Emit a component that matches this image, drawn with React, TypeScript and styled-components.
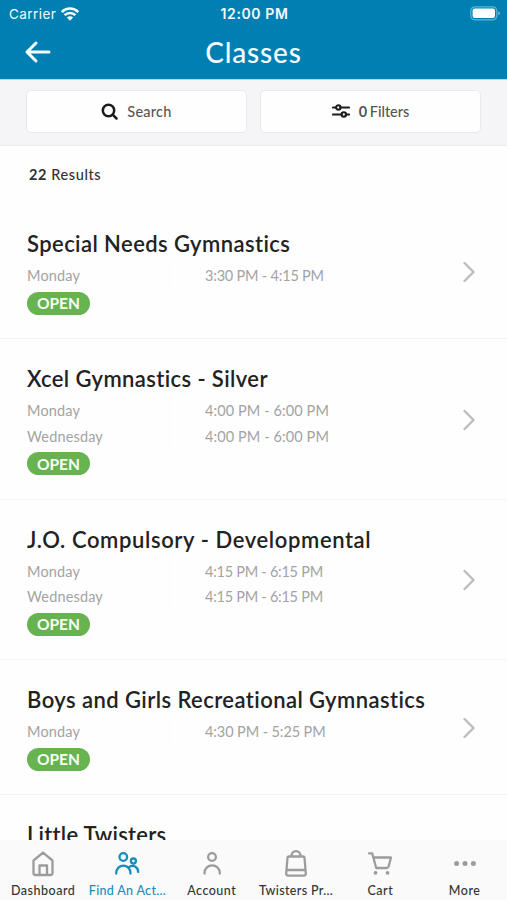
import React from "react";
import styled, { createGlobalStyle } from "styled-components";

const GlobalStyle = createGlobalStyle`
  *, *::before, *::after { box-sizing: border-box; }
  html, body { margin: 0; background: #fefefe; }
  svg { display: block; flex: none; }
`;

const Screen = styled.div`
  width: 507px;
  height: 900px;
  overflow: hidden;
  display: flex;
  flex-direction: column;
  background: #fefefe;
  color: #222;
  font-family: Lato, "Open Sans", sans-serif;
  white-space: nowrap;
`;

const Header = styled.header`
  flex: none;
  height: 80px;
  background: #0080b2;
  border-bottom: 1px solid #a9dbee;
  color: #f4fcff;
`;

const StatusBar = styled.div`
  display: grid;
  grid-template-columns: 1fr auto 1fr;
  align-items: center;
  height: 27px;
  padding: 0 7px 0 9px;
  font-family: Inter, sans-serif;
  font-size: 13.5px;
`;

const Carrier = styled.div`
  display: flex;
  align-items: center;
  gap: 5px;
  letter-spacing: 0.45px;
`;

const Clock = styled.div`
  font-weight: 600;
  font-size: 14px;
  letter-spacing: 0.6px;
`;

const BatterySlot = styled.div`
  justify-self: end;
`;

const NavBar = styled.div`
  display: grid;
  grid-template-columns: 50px 1fr 50px;
  align-items: center;
  height: 50px;
`;

const BackButton = styled.button`
  padding: 0 0 0 24px;
  border: 0;
  background: none;
  color: inherit;
`;

const Heading = styled.h1`
  margin: 0;
  text-align: center;
  font-size: 28px;
  font-weight: 500;
  line-height: 50px;
  letter-spacing: 0.8px;
`;

const Tools = styled.div`
  flex: none;
  display: grid;
  grid-template-columns: 1fr 1fr;
  gap: 13px;
  height: 66px;
  padding: 10px 26px 12px;
  background: #f5f5f7;
  border-bottom: 1px solid #ececee;
`;

const ToolButton = styled.button`
  display: flex;
  align-items: center;
  justify-content: center;
  gap: 9px;
  padding: 0 0 1px;
  border: 1px solid #e9e9ec;
  border-radius: 5px;
  background: #fefefe;
  color: #1c1c1c;
  font-family: inherit;
  font-size: 14.5px;
  font-weight: 500;
`;

const ToolLabel = styled.span<{ $spacing?: number }>`
  color: #555;
  letter-spacing: ${(p) => p.$spacing ?? 0}px;
  word-spacing: -1px;
`;

const Results = styled.div`
  flex: none;
  height: 58px;
  padding-left: 29px;
  line-height: 57px;
  font-size: 14.5px;
  font-weight: 500;
  color: #333;
  letter-spacing: 0.6px;
`;

const List = styled.ul`
  flex: 1;
  min-height: 0;
  margin: 0;
  padding: 0;
  overflow: hidden;
  list-style: none;
`;

const Item = styled.li`
  display: flex;
  align-items: center;
  justify-content: space-between;
  padding: 25px 32px 23.5px 27px;
  border-bottom: 1px solid #f4f4f4;
`;

const Title = styled.h2<{ $spacing: number }>`
  margin: 0 0 4px;
  font-size: 22px;
  font-weight: 600;
  line-height: 30px;
  letter-spacing: ${(p) => p.$spacing}px;
`;

const Session = styled.div`
  display: grid;
  grid-template-columns: 143px auto;
  column-gap: 35px;
  height: 25.5px;
  align-items: center;
  font-size: 14.5px;
  line-height: 25.5px;
  color: #a3a3a3;
`;

const Day = styled.span`
  border-right: 1px solid #fafafa;
  letter-spacing: 0.15px;
`;

const Time = styled.span<{ $spacing: number }>`
  letter-spacing: ${(p) => p.$spacing}px;
`;

const Badge = styled.span`
  display: flex;
  align-items: center;
  justify-content: center;
  width: 63px;
  height: 23px;
  margin-top: 3px;
  border-radius: 12px;
  background: #67b350;
  color: #fafff8;
  font-size: 15.5px;
  font-weight: 700;
`;

const TabBar = styled.nav`
  flex: none;
  display: grid;
  grid-template-columns: repeat(6, 84.3px);
  height: 60px;
  padding-left: 1px;
  background: #fafafa;
`;

const Tab = styled.a<{ $active?: boolean }>`
  display: flex;
  flex-direction: column;
  align-items: center;
  padding-top: 8px;
  color: ${(p) => (p.$active ? "#168dba" : "#9c9c9c")};
`;

const TabLabel = styled.span<{ $active?: boolean; $spacing: number }>`
  margin-top: 3px;
  font-size: 12.5px;
  font-weight: 500;
  line-height: 16px;
  letter-spacing: ${(p) => p.$spacing}px;
  color: ${(p) => (p.$active ? "#168dba" : "#333")};
`;

const Stroke = ({ children, width = 32, height = 32, weight = 2 }: {
  children: React.ReactNode; width?: number; height?: number; weight?: number;
}) => (
  <svg width={width} height={height} viewBox={`0 0 ${width} ${height}`} fill="none"
    stroke="currentColor" strokeWidth={weight} strokeLinecap="round" strokeLinejoin="round">
    {children}
  </svg>
);

const Wifi = () => (
  <svg width="18" height="14" viewBox="0 0 18 14" fill="none" stroke="currentColor" strokeWidth="2.5">
    <path d="M.8 5a11.6 11.6 0 0 1 16.4 0M3.6 8.2a7.6 7.6 0 0 1 10.8 0" />
    <path d="M5.900 10.600a4.400 4.400 0 0 1 6.200 0L9 13.800z" fill="currentColor" stroke="none" />
  </svg>
);

const Battery = () => (
  <svg width="30" height="15" viewBox="0 0 30 15">
    <rect x=".8" y=".8" width="26" height="13" rx="4" fill="none" stroke="#fff" strokeOpacity=".4" strokeWidth="1.2" />
    <rect x="2.6" y="2.6" width="22.4" height="9.4" rx="2" fill="#fff" />
    <path d="M28.4 5.2q1.5.8 1.5 2.1t-1.5 2.1z" fill="#fff" fillOpacity=".5" />
  </svg>
);

type SessionInfo = { day: string; time: string; spacing: number };
type ClassInfo = { title: string; spacing: number; sessions: SessionInfo[] };

const classes: ClassInfo[] = [
  { title: "Special Needs Gymnastics", spacing: 0.42, sessions: [{ day: "Monday", time: "3:30 PM - 4:15 PM", spacing: -0.2 }] },
  {
    title: "Xcel Gymnastics - Silver", spacing: 0.4,
    sessions: [
      { day: "Monday", time: "4:00 PM - 6:00 PM", spacing: 0.1 },
      { day: "Wednesday", time: "4:00 PM - 6:00 PM", spacing: 0.1 },
    ],
  },
  {
    title: "J.O. Compulsory - Developmental", spacing: 0.61,
    sessions: [
      { day: "Monday", time: "4:15 PM - 6:15 PM", spacing: -0.26 },
      { day: "Wednesday", time: "4:15 PM - 6:15 PM", spacing: -0.26 },
    ],
  },
  { title: "Boys and Girls Recreational Gymnastics", spacing: 0.43, sessions: [{ day: "Monday", time: "4:30 PM - 5:25 PM", spacing: -0.1 }] },
  { title: "Little Twisters", spacing: 0.24, sessions: [{ day: "Tuesday", time: "4:30 PM - 5:15 PM", spacing: -0.1 }] },
];

const tabs = [
  { label: "Dashboard", spacing: 0.5, icon: <path d="M6.500 12.500 16 4.700l9.500 7.800V25a2 2 0 0 1-2 2h-15a2 2 0 0 1-2-2zM12.500 27V17.500h7.500V27" /> },
  {
    label: "Find An Act...", spacing: 0.32, active: true,
    icon: <><circle cx="12.300" cy="9" r="3.800" /><circle cx="22.400" cy="13" r="2.500" /><path d="M5.200 25.500c0-10.500 14.300-10.500 14.300 0M18.500 18.800c4.200-2.300 8.700.2 8.700 5.200" /></>,
  },
  { label: "Account", spacing: 0.5, icon: <><circle cx="16" cy="9" r="3.900" /><path d="M8.500 25.500c0-10.800 15.300-10.800 15.300 0" /></> },
  { label: "Twisters Pr...", spacing: 0.35, icon: <><path d="M9 8.500h14a1.500 1.500 0 0 1 1.500 1.500l1.300 15.500a2 2 0 0 1-2 2.200H8.200a2 2 0 0 1-2-2.200L7.500 10A1.500 1.500 0 0 1 9 8.500zM6.700 22h18.600M11.500 8.500c0-7.300 9-7.300 9 0" /></> },
  { label: "Cart", spacing: 0.5, icon: <><path d="M5 5.300h3.200l4 14.700h10.500q1.400 0 1.900-1.500L27 9.500H9.500" /><g fill="currentColor" stroke="none"><circle cx="11.500" cy="24.800" r="1.900" /><circle cx="23.500" cy="24.800" r="1.900" /></g></> },
  { label: "More", spacing: 0.5, icon: <g fill="currentColor" stroke="none"><circle cx="7.600" cy="15.500" r="2.500" /><circle cx="16" cy="15.500" r="2.500" /><circle cx="24.400" cy="15.500" r="2.500" /></g> },
];

export default function App() {
  return (
    <Screen>
      <GlobalStyle />
      <Header>
        <StatusBar>
          <Carrier>Carrier <Wifi /></Carrier>
          <Clock>12:00 PM</Clock>
          <BatterySlot><Battery /></BatterySlot>
        </StatusBar>
        <NavBar>
          <BackButton aria-label="Back">
            <Stroke width={28} height={24} weight={3}><path d="M25 12H3M12 3 3 12l9 9" /></Stroke>
          </BackButton>
          <Heading>Classes</Heading>
        </NavBar>
      </Header>
      <Tools>
        <ToolButton>
          <Stroke width={17} height={17} weight={2.5}><circle cx="7.500" cy="7.500" r="5.700" /><path d="m11.700 11.700 3.800 3.800" /></Stroke>
          <ToolLabel $spacing={0.25}>Search</ToolLabel>
        </ToolButton>
        <ToolButton>
          <Stroke width={18} height={16} weight={2.1}><path d="M1 4.500h3M8.500 4.500H17M1 11.500h8.500M14 11.500h3" /><circle cx="6.300" cy="4.500" r="2.200" /><circle cx="11.800" cy="11.500" r="2.200" /></Stroke>
          <ToolLabel><b>0</b> Filters</ToolLabel>
        </ToolButton>
      </Tools>
      <Results><b>22</b> Results</Results>
      <List>
        {classes.map((c) => (
          <Item key={c.title}>
            <div>
              <Title $spacing={c.spacing}>{c.title}</Title>
              {c.sessions.map((s) => (
                <Session key={s.day}><Day>{s.day}</Day><Time $spacing={s.spacing}>{s.time}</Time></Session>
              ))}
              <Badge>OPEN</Badge>
            </div>
            <Stroke width={12} height={22} weight={2.4}><path d="m1.500 2 9 9-9 9" stroke="#bdbdbd" /></Stroke>
          </Item>
        ))}
      </List>
      <TabBar>
        {tabs.map((t) => (
          <Tab key={t.label} $active={t.active}>
            <Stroke weight={2.3}>{t.icon}</Stroke>
            <TabLabel $active={t.active} $spacing={t.spacing}>{t.label}</TabLabel>
          </Tab>
        ))}
      </TabBar>
    </Screen>
  );
}
